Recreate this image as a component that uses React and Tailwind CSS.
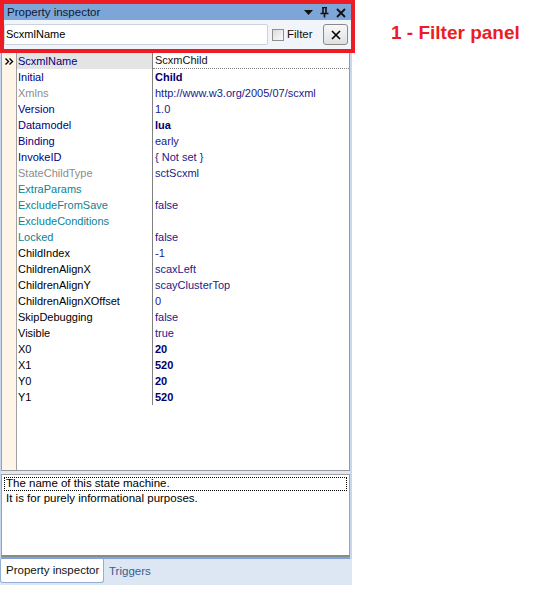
import React from 'react';

const rows = [
  { name: 'ScxmlName', value: 'ScxmChild', nc: 'text-[#00007f]', selected: true },
  { name: 'Initial', value: 'Child', nc: 'text-[#00007f]', bold: true },
  { name: 'Xmlns', value: 'http://www.w3.org/2005/07/scxml', nc: 'text-[#8c8c8c]' },
  { name: 'Version', value: '1.0', nc: 'text-[#00007f]' },
  { name: 'Datamodel', value: 'lua', nc: 'text-[#00007f]', bold: true },
  { name: 'Binding', value: 'early', nc: 'text-[#00007f]' },
  { name: 'InvokeID', value: '{ Not set }', nc: 'text-[#00007f]' },
  { name: 'StateChildType', value: 'sctScxml', nc: 'text-[#8c8c8c]' },
  { name: 'ExtraParams', value: '', nc: 'text-[#0b8296]' },
  { name: 'ExcludeFromSave', value: 'false', nc: 'text-[#0b8296]' },
  { name: 'ExcludeConditions', value: '', nc: 'text-[#0b8296]' },
  { name: 'Locked', value: 'false', nc: 'text-[#0b8296]' },
  { name: 'ChildIndex', value: '-1', nc: 'text-black' },
  { name: 'ChildrenAlignX', value: 'scaxLeft', nc: 'text-black' },
  { name: 'ChildrenAlignY', value: 'scayClusterTop', nc: 'text-black' },
  { name: 'ChildrenAlignXOffset', value: '0', nc: 'text-black' },
  { name: 'SkipDebugging', value: 'false', nc: 'text-black' },
  { name: 'Visible', value: 'true', nc: 'text-black' },
  { name: 'X0', value: '20', nc: 'text-black', bold: true },
  { name: 'X1', value: '520', nc: 'text-black', bold: true },
  { name: 'Y0', value: '20', nc: 'text-black', bold: true },
  { name: 'Y1', value: '520', nc: 'text-black', bold: true },
];

export default function App() {
  return (
    <div className="w-[547px] h-[597px] bg-white flex text-[11px] leading-none font-['Liberation_Sans',Arial,sans-serif] overflow-hidden">
      {/* Left: the docked property inspector */}
      <div className="w-[355px] flex flex-col">
        {/* Header, framed in red */}
        <div className="w-[355px] h-[53px] shrink-0 border-4 border-[#ed1c24] flex flex-col">
          <div className="h-[16px] bg-[#7ea5d8] flex items-center pl-[3px] pr-[5px] pt-[1px]">
            <span className="text-[#0b1a33] text-[11.5px]">Property inspector</span>
            <div className="ml-auto flex items-center gap-[7px]">
              <svg width="9" height="6" viewBox="0 0 9 6"><path d="M0 0h9L4.5 5z" fill="#111" /></svg>
              <svg width="9" height="11" viewBox="0 0 9 11"><path d="M2 0.5h5M3 0.5v6M6 0.5v6M0.5 6.5h8M4.5 6.5v4" stroke="#111" strokeWidth="1.6" fill="none" /></svg>
              <svg width="10" height="10" viewBox="0 0 10 10"><path d="M1 1l8 8M9 1l-8 8" stroke="#111" strokeWidth="1.8" /></svg>
            </div>
          </div>
          <div className="flex-1 bg-[#f1f4f9] flex items-center pl-0 pr-[2px] gap-[4px]">
            <div className="w-[264px] h-[21px] bg-white border border-[#c9d2dd] rounded-[2px] flex items-center pl-[1px] text-[11px] text-black">
              ScxmlName
            </div>
            <div className="w-[12px] h-[12px] border border-[#8f8f8f] bg-gradient-to-br from-[#dcdcdc] to-[#fbfbfb]" />
            <span className="text-[11.5px] text-[#111] ml-[-1px]">Filter</span>
            <div className="ml-auto mr-[1px] w-[25px] h-[21px] border border-[#8a8a8a] rounded-[3px] bg-gradient-to-b from-[#f8f8f8] to-[#e0e0e0] flex items-center justify-center">
              <svg width="10" height="10" viewBox="0 0 10 10"><path d="M1 1l8 8M9 1l-8 8" stroke="#000" strokeWidth="1.6" /></svg>
            </div>
          </div>
        </div>

        {/* Panel body */}
        <div className="w-[352px] flex-1 bg-[#c7d8ee] pl-[1px] pr-[2px] flex flex-col">
          <div className="h-[417px] shrink-0 bg-white border-l border-[#a0a0a0] border-r border-r-[#9a9a9a] flex">
            <div className="w-[15px] bg-[#fdf5e8] border-r border-[#a0a0a0] flex flex-col">
              <div className="h-[16px] flex items-center justify-center">
                <svg width="9" height="7" viewBox="0 0 9 7"><path d="M0.5 0.5l3 3-3 3M4.5 0.5l3 3-3 3" stroke="#000" strokeWidth="1.4" fill="none" /></svg>
              </div>
            </div>
            <div className="flex-1 flex flex-col">
              {rows.map((r) => (
                <div key={r.name} className="h-[16px] shrink-0 flex">
                  <div className={`w-[135px] pl-[1px] flex items-center ${r.nc} ${r.selected ? 'bg-[#e4e4e4]' : ''}`}>
                    {r.name}
                  </div>
                  <div className="w-[1px] bg-[#808080]" />
                  <div className={`flex-1 pl-[2px] flex items-center text-[#1a1a8c] ${r.bold ? 'font-bold text-[#00006e]' : ''} ${r.selected ? 'border-b border-dotted border-[#808080] text-[#111]' : ''}`}>
                    {r.value}
                  </div>
                </div>
              ))}
            </div>
          </div>
          <div className="h-[4px] shrink-0 bg-[#e2e8f0] border-t border-[#9a9a9a]" />
          <div className="h-[83px] shrink-0 bg-white border border-[#a0a0a0] border-b-2 border-b-[#8a8a8a] p-[2px] text-black text-[11.5px]">
            <div className="border border-dotted border-black h-[14px] flex items-center pl-[1px]">The name of this state machine.</div>
            <div className="h-[14px] flex items-center pl-[2px] mt-[1px]">It is for purely informational purposes.</div>
          </div>
          <div className="h-[2px] shrink-0 bg-[#7ea5d8]" />
          <div className="h-[26px] shrink-0 bg-[#dde7f3] flex items-start ml-[-1px] mr-[-2px]">
            <div className="w-[104px] h-[24px] bg-white border border-t-0 border-[#93aed3] rounded-b-[3px] flex items-center pl-[5px] pt-[1px] text-[11.5px] text-[#111]">
              Property inspector
            </div>
            <div className="h-[24px] flex items-center pl-[5px] pt-[1px] text-[11.5px] text-[#3b5b8f]">Triggers</div>
          </div>
          <div className="flex-1 bg-white ml-[-1px] mr-[-2px]" />
        </div>
      </div>

      {/* Right: annotation */}
      <div className="flex-1 pl-[36px] pt-[23px]">
        <span className="text-[#ed1c24] font-bold text-[19px] font-['Liberation_Sans',Arial,sans-serif]">1 - Filter panel</span>
      </div>
    </div>
  );
}
